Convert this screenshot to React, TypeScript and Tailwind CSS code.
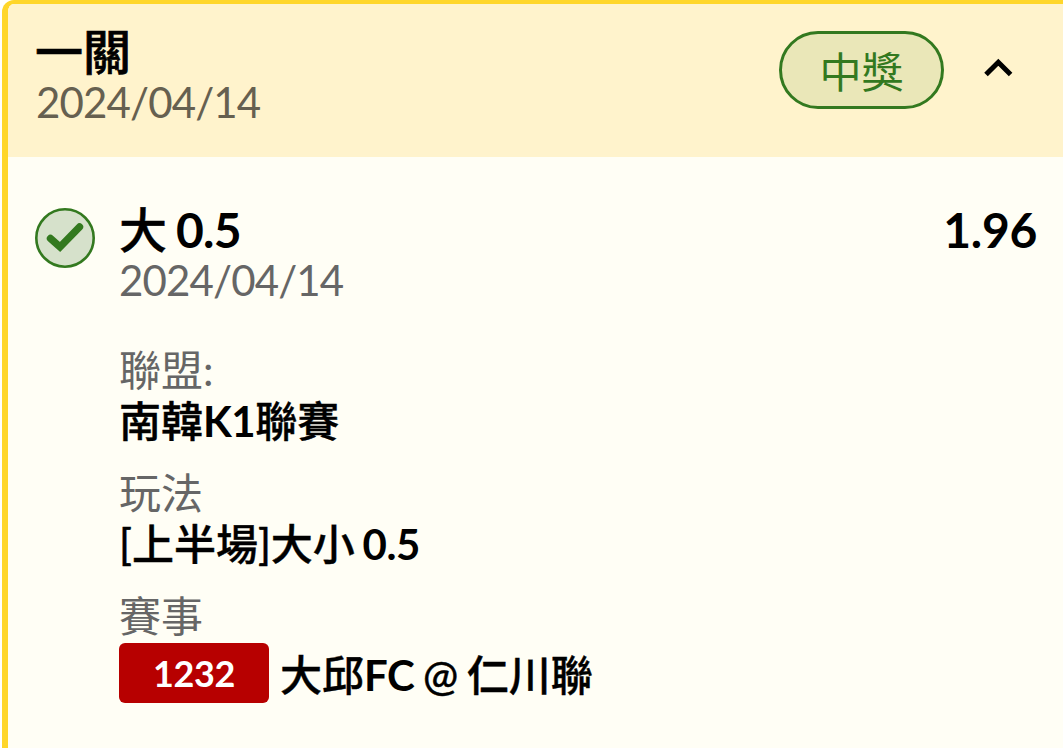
import { ReactNode } from "react";

interface DetailProps {
  label: string;
  children: ReactNode;
}

function Detail({ label, children }: DetailProps) {
  return (
    <div className="mb-[21px]">
      <div className="h-[51px] text-[42px] leading-[51px] text-[#666]">{label}</div>
      <div className="h-[51px] text-[42px] leading-[51px] font-medium text-black [-webkit-text-stroke:0.4px_black]">
        {children}
      </div>
    </div>
  );
}

function Latin({ children }: { children: ReactNode }) {
  return <b className="font-bold tracking-[-0.5px] [-webkit-text-stroke:0px] [word-spacing:-2px]">{children}</b>;
}

export default function App() {
  return (
    <div className="h-[748px] w-[1063px] overflow-hidden pl-[2px] font-['Lato','Noto_Sans_CJK_TC',sans-serif]">
      <div className="h-[800px] w-[1100px] overflow-hidden rounded-tl-xl border-t-4 border-l-[6px] border-[#ffd62a] bg-[#fffef5]">
        <header className="flex h-[153px] w-[1055px] bg-[#fff3cc] pl-[27px]">
          <div className="flex-1 pt-[21px]">
            <div className="h-[54px] text-[48px] leading-[54px] font-medium [-webkit-text-stroke:0.7px_black]">一關</div>
            <div className="pl-px text-[42px] leading-[47px] tracking-[-0.85px] text-[#666050]">2024/04/14</div>
          </div>
          <div className="mt-[27px] flex h-[78px] w-[165px] items-center justify-center rounded-full border-3 border-[#33791f] bg-[#eae7b8] pt-1 text-[42px] text-[#33791f]">
            中獎
          </div>
          <svg className="mt-[48px] mr-[49px] ml-[38px] h-8 w-8" viewBox="0 0 32 32" fill="none" stroke="#000" strokeWidth="5">
            <path d="M4 22.5 16.3 10.2 28.6 22.5" />
          </svg>
        </header>
        <main className="flex w-[1055px] pt-[46px] pl-[27px]">
          <svg className="mt-[5px] h-[60px] w-[60px]" viewBox="0 0 60 60" fill="none">
            <circle cx="30" cy="30" r="28.7" fill="#d6e1cb" stroke="#33791f" strokeWidth="2.6" />
            <path d="M15.5 30.5 25 39 44.5 19" stroke="#33791f" strokeWidth="7.4" strokeLinecap="round" />
          </svg>
          <div className="ml-[24px] flex-1">
            <div className="flex h-[54px] justify-between pr-[26px] text-[48px] leading-[54px] font-bold">
              <span className="tracking-[-0.8px] [word-spacing:-1px]">
                <span className="font-medium [-webkit-text-stroke:0.4px_black]">大</span> 0.5
              </span>
              <span className="tracking-[-0.3px]">1.96</span>
            </div>
            <div className="mb-[40px] h-[48px] text-[42px] leading-[46px] tracking-[-0.85px] text-[#666]">2024/04/14</div>
            <Detail label="聯盟:">
              南韓<Latin>K1</Latin>聯賽
            </Detail>
            <Detail label="玩法">
              [上半場]大小<Latin> 0.5</Latin>
            </Detail>
            <Detail label="賽事">
              <div className="flex items-center">
                <span className="mt-px mr-[11px] flex h-[60px] w-[150px] items-center justify-center rounded-md bg-[#b70000] pt-px text-[36px] font-bold tracking-[-0.4px] text-white [-webkit-text-stroke:0px]">
                  1232
                </span>
                <span className="pt-[5px] [word-spacing:-2px]">
                  大邱<Latin>FC</Latin> @ 仁川聯
                </span>
              </div>
            </Detail>
          </div>
        </main>
      </div>
    </div>
  );
}
